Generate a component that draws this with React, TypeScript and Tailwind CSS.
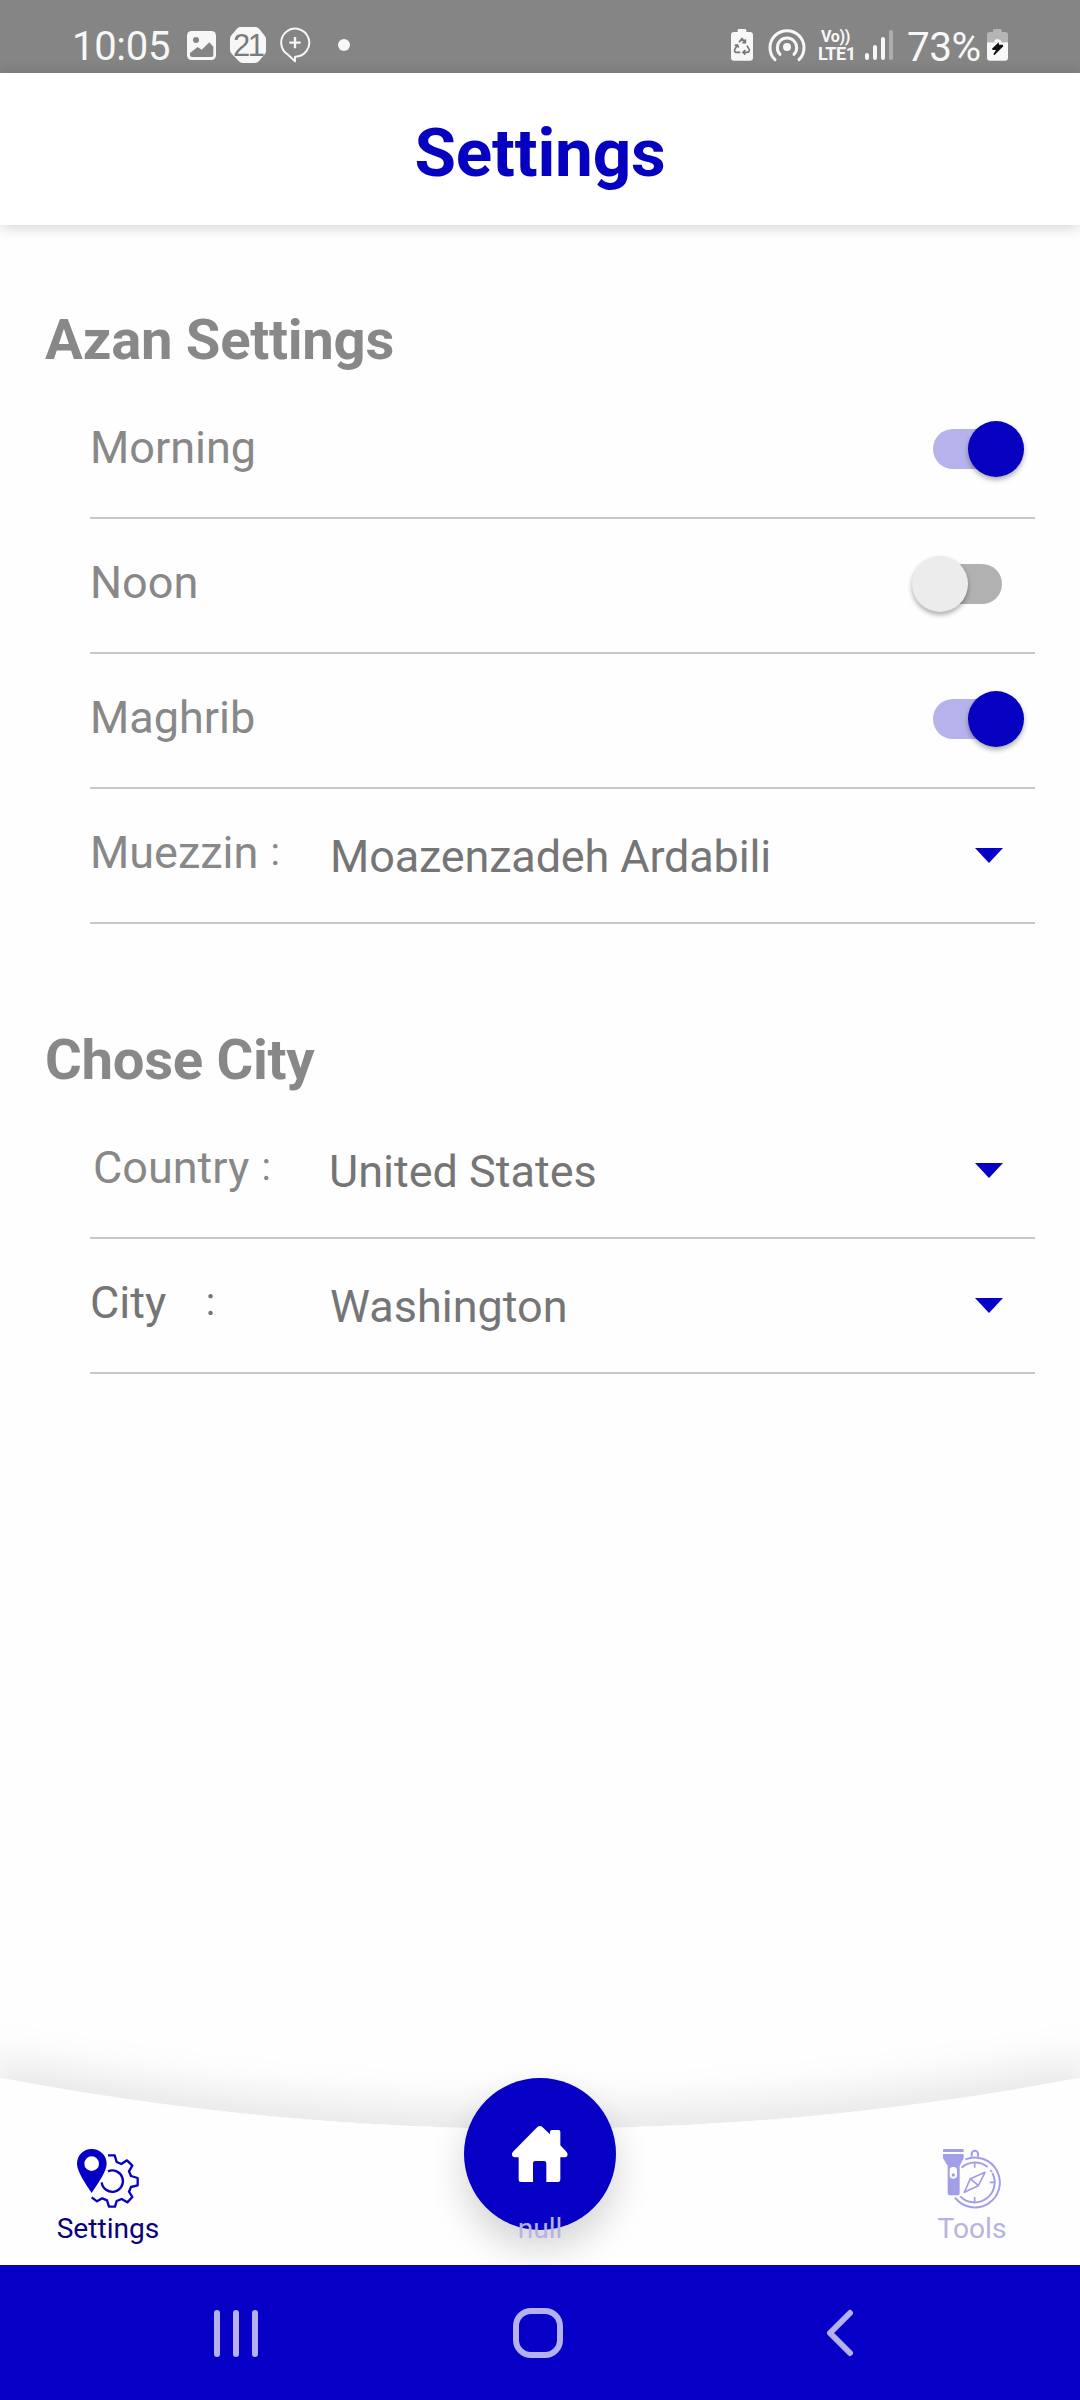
import React from "react";

const BLUE = "#0600c6";

function StatusBar() {
  return (
    <div className="flex h-[73px] shrink-0 items-start bg-[#858585] pl-[72px] text-[#f7f7f7]">
      <span className="w-[115px] pt-[4px] text-[40px] leading-[86px] tracking-[-0.3px]">10:05</span>
      {/* gallery */}
      <svg className="mt-[31px] h-[29px] w-[29px]" viewBox="0 0 87 87">
        <rect x="0" y="0" width="87" height="87" rx="14" fill="#f7f7f7" />
        <circle cx="27" cy="27" r="9" fill="#858585" />
        <path d="M9 66 L32 48 L44 56 L67 34 L79 47 V72 Q79 78 73 78 H15 Q9 78 9 72Z" fill="#858585" />
      </svg>
      {/* calendar day */}
      <div className="relative ml-[14px] mt-[27px] h-[36px] w-[36px]">
        <svg className="h-[36px] w-[36px]" viewBox="0 0 108 108">
          <path d="M30 0 H78 Q84 0 90 8 L104 26 Q108 30 108 36 V72 Q108 78 103 83 L88 101 Q82 108 74 108 H38 Q31 108 26 102 L5 80 Q0 75 0 68 V36 Q0 29 5 24 L20 6 Q25 0 30 0Z" fill="#f7f7f7" />
        </svg>
        <span className="absolute left-[3px] top-0 w-[34px] font-['Liberation_Sans'] text-[31px] leading-[38px] tracking-[-2.5px] text-[#7a7a7a]">21</span>
      </div>
      {/* chat plus */}
      <svg className="ml-[13px] mt-[27px] h-[37px] w-[32px]" viewBox="0 0 96 111" fill="none" stroke="#f7f7f7">
        <path d="M48 103 V89 A42 42 0 1 0 27 83 Q37 92 48 103Z" strokeWidth="6" strokeLinejoin="round" />
        <path d="M48 30 V64 M31 47 H65" strokeWidth="7" />
      </svg>
      <span className="ml-[27px] mt-[39px] h-[12px] w-[12px] rounded-full bg-[#f7f7f7]" />

      {/* battery saver */}
      <svg className="ml-[381px] mt-[29px] h-[32px] w-[22px]" viewBox="0 0 66 96">
        <path d="M20 4 Q20 0 24 0 H42 Q46 0 46 4 V9 H57 Q66 9 66 18 V86 Q66 95 57 95 H9 Q0 95 0 86 V18 Q0 9 9 9 H20Z" fill="#f7f7f7" />
        <path d="M24 40 L33 29 L42 40 M48 50 L55 62 Q56 70 47 70 H37 M28 70 H15 Q8 68 12 60 L18 50 M11 49 L19 48 L23 56 M43 63 L36 70 L43 77 M43 31 L43 41 L34 41" fill="none" stroke="#777" strokeWidth="5" />
      </svg>
      {/* hotspot */}
      <svg className="ml-[15px] mt-[28px] h-[34px] w-[38px]" viewBox="0 0 114 102" fill="none" stroke="#f7f7f7" strokeWidth="9">
        <circle cx="57" cy="57" r="12" fill="#f7f7f7" stroke="none" />
        <path d="M36 79 A29 29 0 1 1 78 79 M21 95 A51 51 0 1 1 93 95" strokeLinecap="round" />
      </svg>
      {/* carrier */}
      <div className="ml-[12px] mt-[28px] flex w-[47px] flex-col">
        <span className="pl-[3px] text-[16px] font-bold leading-[17px] tracking-[-0.3px]">Vo))</span>
        <span className="text-[18px] font-bold leading-[17px] tracking-[-0.4px]">LTE1</span>
      </div>
      {/* signal */}
      <div className="mt-[30px] flex h-[30px] w-[28px] items-end justify-between">
        <i className="h-[7px] w-[4px] rounded-full bg-[#f7f7f7]" />
        <i className="h-[15px] w-[4px] rounded-full bg-[#f7f7f7]" />
        <i className="h-[23px] w-[4px] rounded-full bg-[#f7f7f7]" />
        <i className="h-[30px] w-[4px] rounded-full bg-[#adadad]" />
      </div>
      <span className="ml-[14px] w-[80px] pt-[4px] text-[40.500px] leading-[86px] tracking-[-0.5px]">73%</span>
      {/* battery */}
      <svg className="mt-[29px] h-[32px] w-[21px]" viewBox="0 0 63 96">
        <path d="M18 4 Q18 0 22 0 H40 Q44 0 44 4 V9 H54 Q63 9 63 18 V40 H0 V18 Q0 9 9 9 H18Z" fill="#b5b5b5" />
        <path d="M0 40 H63 V86 Q63 95 54 95 H9 Q0 95 0 86Z" fill="#f7f7f7" />
        <path d="M22 38 Q22 30 33 30 L44 36 L38 44Z" fill="#f7f7f7" />
        <path d="M35 40 L15 59 L17 63 H27 L19 76 L22 79 L49 52 L47 47 H36Z" fill="#111" />
      </svg>
    </div>
  );
}

function Switch({ on }: { on: boolean }) {
  return on ? (
    <div className="relative mr-[33px] mt-[45px] h-[40px] w-[69px] rounded-full bg-[#b6b2ec]">
      <span className="absolute -right-[22px] -top-[8px] h-[56px] w-[56px] rounded-full bg-[#0600c0] shadow-[0_3px_5px_rgba(0,0,0,0.32)]" />
    </div>
  ) : (
    <div className="relative mr-[33px] mt-[45px] h-[40px] w-[69px] rounded-full bg-[#b1b1b1]">
      <span className="absolute -left-[21px] -top-[8px] h-[56px] w-[56px] rounded-full bg-[#ececec] shadow-[0_3px_5px_rgba(0,0,0,0.32)]" />
    </div>
  );
}

function Row({ children }: { children: React.ReactNode }) {
  return (
    <div className="flex h-[135px] items-start border-b-2 border-[#c8c8c8] text-[45px] leading-[127px] text-[#888]">
      {children}
    </div>
  );
}

function ToggleRow({ label, on }: { label: string; on: boolean }) {
  return (
    <Row>
      <span className="flex-1">{label}</span>
      <Switch on={on} />
    </Row>
  );
}

function Colon() {
  return <span className="relative -top-[3px] pl-[1px] text-[39px] leading-none">:</span>;
}

function SelectRow({ label, value }: { label: React.ReactNode; value: React.ReactNode }) {
  return (
    <Row>
      <div className="w-[240px] whitespace-pre">{label}</div>
      <div className="flex-1 pt-[4px] text-[#757575]">{value}</div>
      <svg className="mr-[32px] mt-[59px] h-[15px] w-[28px]" viewBox="0 0 28 15">
        <path d="M0 0H28L14 15Z" fill={BLUE} />
      </svg>
    </Row>
  );
}

function SettingsIcon() {
  return (
    <svg className="h-[60px] w-[64px]" viewBox="140 86 192 180" fill="none" stroke={BLUE} strokeWidth="7">
      <path
        fill={BLUE}
        stroke="none"
        fillRule="evenodd"
        d="M187 89 C212 89 232 108 232 133 C232 156 206 192 187 221 C168 192 143 156 143 133 C143 108 162 89 187 89Z M187 111 A22 22 0 1 0 187 155 A22 22 0 1 0 187 111Z"
      />
      <path
        strokeLinejoin="round"
        d="M236 108 H256 L262 128 L276 134 L293 123 L309 139 L299 156 L305 170 L325 176 V198 L305 203 L299 217 L309 233 L294 249 L277 239 L262 245 L257 262 H239 L233 243 L219 237 L203 246 L187 234"
      />
      <path d="M236 156 A32 32 0 1 1 217 189" />
    </svg>
  );
}

function ToolsIcon() {
  return (
    <svg className="h-[61px] w-[60px]" viewBox="128 86 180 183" fill="none" stroke="#a39ee8" strokeWidth="6">
      <path d="M134 89 H190 Q193 89 193 92 V98 H131 V92 Q131 89 134 89Z M131 104 H193 V117 L181 139 V222 Q181 228 175 228 H151 Q145 228 145 222 V139 L131 117Z" fill="#a39ee8" stroke="none" />
      <rect x="151" y="143" width="22" height="35" rx="10" fill="#fff" stroke="none" />
      <circle cx="162" cy="167" r="5" fill="#a39ee8" stroke="none" />
      <path d="M198 120 A75 75 0 1 1 167 235" />
      <path d="M187 145 A60 60 0 0 1 265 143 M279 161 A60 60 0 0 1 183 231" />
      <path d="M273 152 l5 6" strokeWidth="5" />
      <path d="M217 112 V104 A9.500 9.500 0 0 1 236 104 V112" />
      <path d="M226 129 V145 M271 189 H286 M226 233 V249" strokeWidth="5" />
      <path d="M257 159 L237 199 L195 219 L213 178Z M213 178 L237 199" strokeWidth="5" strokeLinejoin="round" />
    </svg>
  );
}

function BottomNav() {
  return (
    <div className="relative h-[285px] shrink-0 overflow-hidden">
      {/* curved panel with its upward shadow */}
      <svg className="absolute inset-0 h-[285px] w-[1080px]" viewBox="0 0 1080 285">
        <defs>
          <filter id="lift" x="-100" y="-60" width="1280" height="440" filterUnits="userSpaceOnUse">
            <feDropShadow dx="0" dy="-18" stdDeviation="20" floodColor="#000" floodOpacity="0.092" />
          </filter>
        </defs>
        <path d="M-10 96 L0 98 Q540 200 1080 98 L1090 96 V360 H-10Z" fill="#fefefe" filter="url(#lift)" />
      </svg>
      <div className="relative flex h-full justify-between text-[28.125px] leading-[34px]">
        <div className="flex w-[216px] flex-col items-center pt-[168px] text-[#0a007c]">
          <SettingsIcon />
          <span className="pt-[4px]">Settings</span>
        </div>
        <div className="relative flex w-[216px] flex-col items-center pt-[98px] text-[#b7b3e0]">
          <div className="flex h-[152px] w-[152px] shrink-0 items-center justify-center rounded-full bg-[#0600c4] shadow-[0_18px_36px_rgba(0,0,0,0.17)]">
            <svg className="h-[56px] w-[56px]" viewBox="276 258 168 168">
              <path
                fill="#fff"
                d="M352 261 Q360 255 367 261 L390 283 V275 Q390 270 396 270 H416 Q421 270 421 275 V316 L440 336 Q444 341 442 347 Q440 352 434 352 H421 V419 Q421 426 414 426 H379 V370 Q379 363 372 363 H346 Q339 363 339 370 V426 H303 Q296 426 296 419 V352 H284 Q278 352 276 346 Q275 340 279 335Z"
              />
            </svg>
          </div>
          <span className="-mt-[18px]">null</span>
        </div>
        <div className="flex w-[216px] flex-col items-center pt-[168px] text-[#b7b3e0]">
          <ToolsIcon />
          <span className="pt-[3px]">Tools</span>
        </div>
      </div>
    </div>
  );
}

function SystemNav() {
  return (
    <div className="flex h-[135px] shrink-0 items-start bg-[#0600c6] pl-[214px] pt-[43px]">
      <div className="mt-[2px] flex h-[47px] w-[44px] justify-between">
        <i className="w-[6px] rounded-full bg-[#b5b1ee]" />
        <i className="w-[6px] rounded-full bg-[#b5b1ee]" />
        <i className="w-[6px] rounded-full bg-[#b5b1ee]" />
      </div>
      <div className="ml-[255px] h-[50px] w-[50px] rounded-[18px] border-[6px] border-[#b5b1ee]" />
      <svg className="ml-[262px] mt-[1px] h-[48px] w-[30px]" viewBox="0 0 30 48" fill="none" stroke="#b5b1ee" strokeWidth="6" strokeLinecap="round" strokeLinejoin="round">
        <path d="M25 4 L5 24 L25 44" />
      </svg>
    </div>
  );
}

export default function App() {
  return (
    <div className="flex h-[2400px] w-[1080px] flex-col overflow-hidden bg-[#fefefe] font-[Roboto,sans-serif]">
      <StatusBar />
      <header className="h-[152px] shrink-0 bg-white text-center text-[67.500px] font-bold leading-[160px] tracking-[-0.2px] text-[#0600c0] shadow-[0_2px_14px_rgba(0,0,0,0.18)]">
        Settings
      </header>
      <main className="flex-1">
        <section className="pt-[75px]">
          <h2 className="h-[84px] pl-[45px] text-[56.250px] font-bold leading-[80px] tracking-[-0.3px] text-[#888]">Azan Settings</h2>
          <div className="ml-[90px] w-[945px]">
            <ToggleRow label="Morning" on />
            <ToggleRow label="Noon" on={false} />
            <ToggleRow label="Maghrib" on />
            <SelectRow
              label={<>Muezzin <Colon /></>}
              value={<span className="tracking-[-0.16px]">Moazenzadeh Ardabili</span>}
            />
          </div>
        </section>
        <section className="pt-[96px]">
          <h2 className="h-[84px] pl-[45px] text-[56.250px] font-bold leading-[80px] tracking-[-0.3px] text-[#888]">Chose City</h2>
          <div className="ml-[90px] w-[945px]">
            <SelectRow
              label={<span className="pl-[3px]">Country <Colon /></span>}
              value={<span className="-ml-[1px]">United States</span>}
            />
            <SelectRow
              label={<span className="text-[#757575]">City<span className="pl-[5px]">{"   "}</span><Colon /></span>}
              value={<span>Washington</span>}
            />
          </div>
        </section>
      </main>
      <BottomNav />
      <SystemNav />
    </div>
  );
}
